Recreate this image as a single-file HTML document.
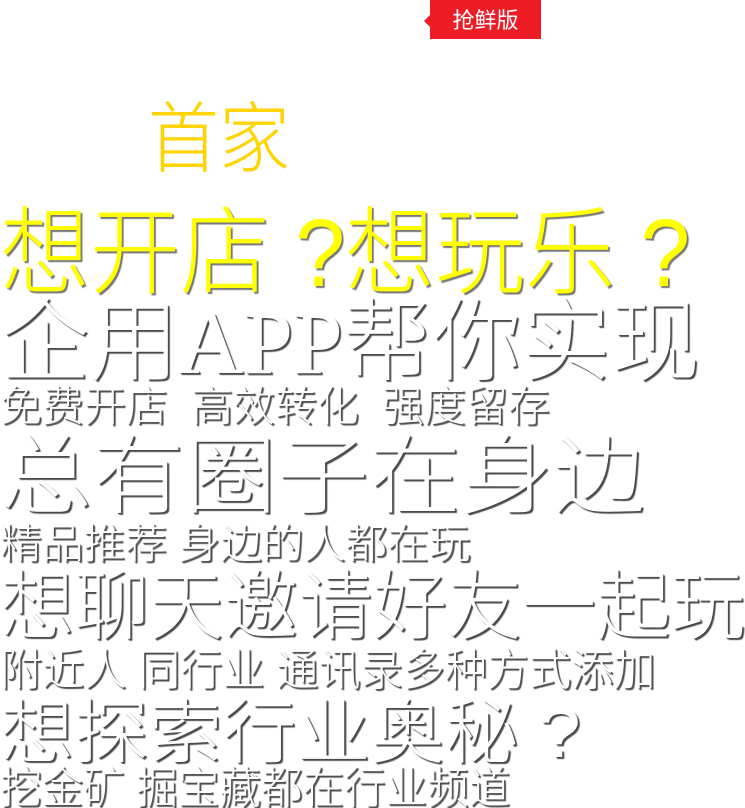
<!DOCTYPE html>
<html><head><meta charset="utf-8"><style>
html,body{margin:0;padding:0;background:#fff;width:745px;height:808px;overflow:hidden;position:relative}
.t{position:absolute;left:0;white-space:nowrap;line-height:1;font-family:"Liberation Sans","Noto Sans CJK SC",sans-serif;font-weight:300;color:#fff;text-shadow:2px 2px 1px #4a4a4a, 1px 1px 0 #888;transform-origin:0 0}
.y{color:#ffff00;text-shadow:2px 2px 1px #777}
.badge{position:absolute;left:430px;top:0;width:111px;height:39px;background:#ee1c25;color:#fff;font:22px "Noto Sans CJK SC",sans-serif;line-height:38px;text-align:center}
.badge:before{content:"";position:absolute;left:-6px;top:15px;border-right:6px solid #ee1c25;border-top:6px solid transparent;border-bottom:6px solid transparent}
</style></head><body>
<div class="badge">抢鲜版</div>
<div class="t" id="l0" style="left:148px;top:102px;font-size:77px;color:#ffd400;text-shadow:none">首家</div>
<div class="t y" id="l1" style="top:206px;font-size:96px">想开店 ?想玩乐 ?</div>
<div class="t" id="l2" style="top:299px;font-size:90px;font-family:'Liberation Serif','Noto Sans CJK SC',serif">企用APP帮你实现</div>
<div class="t" id="l3" style="top:386px;font-size:42px">免费开店&nbsp;&nbsp;高效转化&nbsp;&nbsp;强度留存</div>
<div class="t" id="l4" style="top:434px;font-size:86px">总有圈子在身边</div>
<div class="t" id="l5" style="top:524px;font-size:41px">精品推荐 身边的人都在玩</div>
<div class="t" id="l6" style="top:570px;font-size:76px">想聊天邀请好友一起玩</div>
<div class="t" id="l7" style="top:649px;font-size:44px">附近人 同行业 通讯录多种方式添加</div>
<div class="t" id="l8" style="top:698px;font-size:70px">想探索行业奥秘 ?</div>
<div class="t" id="l9" style="top:767px;font-size:44px">挖金矿 掘宝藏都在行业频道</div>
<script>
var w={l0:142,l1:690,l2:700,l3:550,l4:645,l5:470,l6:745,l7:655,l8:580,l9:510};
for(var k in w){var e=document.getElementById(k);var s=w[k]/e.offsetWidth;e.style.transform='scaleX('+s+')';}
</script>
</body></html>
